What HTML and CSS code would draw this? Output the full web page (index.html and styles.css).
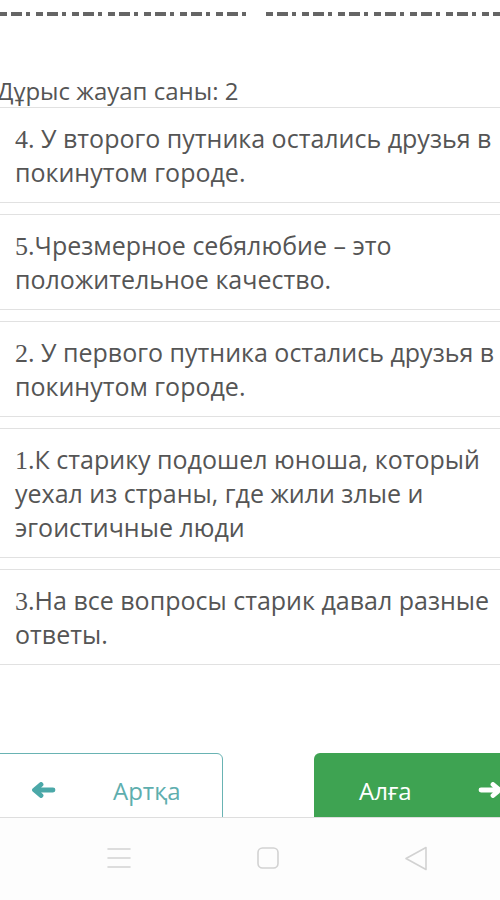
FILE: index.html
```html
<!DOCTYPE html>
<html lang="ru">
<head>
<meta charset="utf-8">
<title>Quiz</title>
<link rel="stylesheet" href="styles.css">
</head>
<body>
<div class="screen">
  <div class="topstrip">
    <div class="dashes">
      <span class="dash d1"></span>
      <span class="dash d2"></span>
    </div>
  </div>
  <div class="score">Дұрыс жауап саны: 2</div>
  <div class="list">
    <div class="card"><span class="num">4</span>. У второго путника остались друзья в<br>покинутом городе.</div>
    <div class="card"><span class="num">5</span>.Чрезмерное себялюбие – это<br>положительное качество.</div>
    <div class="card"><span class="num">2</span>. У первого путника остались друзья в<br>покинутом городе.</div>
    <div class="card"><span class="num">1</span>.К старику подошел юноша, который<br>уехал из страны, где жили злые и<br>эгоистичные люди</div>
    <div class="card"><span class="num">3</span>.На все вопросы старик давал разные<br>ответы.</div>
  </div>
  <div class="buttons">
    <div class="btn back">
      <svg class="arrow" viewBox="0 0 26 16" width="26" height="16"><path d="M23 8H5M11 2.5L4.5 8L11 13.5" fill="none" stroke="currentColor" stroke-width="4.8" stroke-linecap="round" stroke-linejoin="round"/></svg>
      <span class="label">Артқа</span>
    </div>
    <div class="btn next">
      <span class="label">Алға</span>
      <svg class="arrow" viewBox="0 0 26 16" width="26" height="16"><path d="M3 8H21M15 2.5L21.5 8L15 13.5" fill="none" stroke="currentColor" stroke-width="4.8" stroke-linecap="round" stroke-linejoin="round"/></svg>
    </div>
  </div>
  <div class="navbar">
    <svg class="navicon" viewBox="0 0 24 22" width="24" height="22"><path d="M1 2H23M1 11H23M1 20H23" fill="none" stroke="#d2d2d2" stroke-width="1.6" stroke-linecap="round"/></svg>
    <svg class="navicon" viewBox="0 0 22 22" width="22" height="22"><rect x="1" y="1" width="20" height="20" rx="4.5" fill="none" stroke="#d2d2d2" stroke-width="1.6"/></svg>
    <svg class="navicon" viewBox="0 0 24 25" width="24" height="25"><path d="M22 1.5L2 12.5L22 23.5Z" fill="none" stroke="#d2d2d2" stroke-width="1.6" stroke-linejoin="round"/></svg>
  </div>
</div>
</body>
</html>
```

FILE: styles.css
```css
html, body {
  margin: 0;
  padding: 0;
  background: #ffffff;
}

.screen {
  position: relative;
  width: 500px;
  height: 900px;
  overflow: hidden;
  background: #ffffff;
  font-family: "Open Sans", "Noto Sans", sans-serif;
  color: #555555;
}

.topstrip {
  height: 75px;
  padding-top: 12px;
  box-sizing: border-box;
}

.dashes {
  display: flex;
  gap: 17px;
  height: 4px;
}

.dash {
  display: block;
  height: 4px;
  background: repeating-linear-gradient(90deg, #4a4a4a 0 7px, transparent 7px 11px, #4a4a4a 11px 22px, transparent 22px 26px, #4a4a4a 26px 30px, transparent 30px 36px);
  opacity: 0.85;
}

.d1 { width: 255px; }
.d2 { width: 240px; }

.score {
  font-size: 24px;
  line-height: 32px;
  margin-left: -3px;
  white-space: nowrap;
}

.list {
  display: flex;
  flex-direction: column;
  gap: 11px;
}

.card {
  border-top: 1px solid #e1e1e1;
  border-bottom: 1px solid #e1e1e1;
  background: #ffffff;
  padding: 13px 0 13px 15px;
  font-size: 25px;
  line-height: 34px;
  white-space: nowrap;
}

.num {
  font-family: "Liberation Serif", "Times New Roman", serif;
  font-size: 26px;
  line-height: 0;
}

.buttons {
  display: flex;
  gap: 91px;
  margin-top: 88px;
  margin-left: -20px;
}

.btn {
  display: flex;
  align-items: center;
  box-sizing: border-box;
  height: 74px;
  border-radius: 6px;
  font-size: 24px;
  flex-shrink: 0;
}

.back {
  width: 243px;
  border: 1.5px solid #69b3b3;
  color: #5eaeae;
  padding-left: 49px;
}

.back .arrow {
  color: #4ba8a8;
}

.back .label {
  margin-left: 57px;
}

.next {
  width: 240px;
  background: #3ea352;
  color: #ffffff;
  padding-left: 45px;
}

.next .label {
  margin-right: 66px;
}

.navbar {
  position: absolute;
  left: 0;
  right: 0;
  bottom: 0;
  height: 83px;
  box-sizing: border-box;
  border-top: 1px solid #dedede;
  background: #fdfdfd;
  display: flex;
  align-items: center;
  justify-content: space-between;
  padding: 0 72px 2px 107px;
}
```
